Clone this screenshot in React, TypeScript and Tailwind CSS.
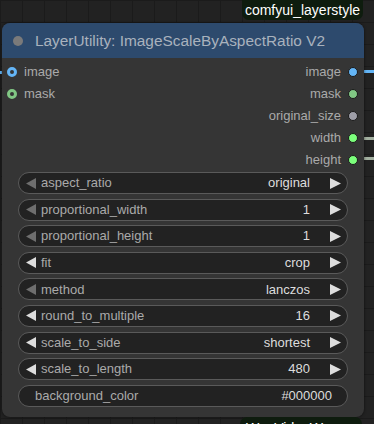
import React from 'react';

const inputs = [
  { name: 'image', color: '#64b5f6' },
  { name: 'mask', color: '#81c784' },
];

const outputs = [
  { name: 'image', color: '#64b5f6' },
  { name: 'mask', color: '#81c784' },
  { name: 'original_size', color: '#9e9ea8' },
  { name: 'width', color: '#7cff7c' },
  { name: 'height', color: '#7cff7c' },
];

const widgets = [
  { label: 'aspect_ratio', value: 'original', leftOff: true },
  { label: 'proportional_width', value: '1', leftOff: true },
  { label: 'proportional_height', value: '1', leftOff: true },
  { label: 'fit', value: 'crop', leftOff: false },
  { label: 'method', value: 'lanczos', leftOff: true },
  { label: 'round_to_multiple', value: '16', leftOff: false },
  { label: 'scale_to_side', value: 'shortest', leftOff: false },
  { label: 'scale_to_length', value: '480', leftOff: false },
];

function Arrow({ dir, dim }: { dir: 'left' | 'right'; dim?: boolean }) {
  const pts = dir === 'left' ? '10,0 10,11 0,5.5' : '0,0 0,11 11,5.5';
  return (
    <svg width="11" height="11" viewBox="0 0 11 11" className="shrink-0">
      <polygon points={pts} fill={dim ? '#6e6e6e' : '#dddddd'} />
    </svg>
  );
}

export default function App() {
  return (
    <div
      className="relative w-[374px] h-[424px] overflow-hidden bg-[#222222] bg-[linear-gradient(#1b1b1b_1px,transparent_1px),linear-gradient(90deg,#1b1b1b_1px,transparent_1px)] bg-[size:22px_22px] font-['Liberation_Sans',Arial,sans-serif]"
    >
      {/* links */}
      <div className="absolute left-0 top-[71px] w-[4px] h-[3px] bg-[#64b5f6]" />
      <div className="absolute left-[362px] top-[70px] w-[12px] h-[3px] bg-[#64b5f6]" />
      <div className="absolute left-[362px] top-[137px] w-[12px] h-[3px] bg-[#a3b0a0]" />
      <div className="absolute left-[362px] top-[157px] w-[12px] h-[3px] bg-[#a3b0a0]" />

      {/* badge top */}
      <div className="absolute left-[242px] top-[-6px] h-[26px] w-[121px] rounded-[7px] bg-[#0e1c0e] flex items-center justify-center pt-[6px] text-[14px] text-white">
        comfyui_layerstyle
      </div>

      {/* node */}
      <div className="relative ml-[2px] mt-[23px] w-[362px] rounded-[8px] bg-[#353535] shadow-[0_0_3px_rgba(0,0,0,0.6)]">
        <div className="flex h-[35px] items-center gap-[12px] rounded-t-[8px] bg-[#2d4a6d] pl-[11px]">
          <div className="h-[10px] w-[10px] rounded-full bg-[#7a7a7a]" />
          <span className="text-[15.4px] text-[#a9b2bd]">LayerUtility: ImageScaleByAspectRatio V2</span>
        </div>

        <div className="flex justify-between pt-[3px]">
          <div className="flex flex-col">
            {inputs.map((s) => (
              <div key={s.name} className="flex h-[22px] items-center gap-[7px] pl-[5px]">
                <div
                  className="h-[10px] w-[10px] rounded-full border-[3px] bg-[#353535]"
                  style={{ borderColor: s.color }}
                />
                <span className="text-[13px] text-[#aaaaaa]">{s.name}</span>
              </div>
            ))}
          </div>
          <div className="flex flex-col items-end">
            {outputs.map((s) => (
              <div key={s.name} className="flex h-[22px] items-center gap-[7px] pr-[6px]">
                <span className="text-[13px] text-[#aaaaaa]">{s.name}</span>
                <div
                  className="h-[10px] w-[10px] rounded-full border border-[#1a1a1a]"
                  style={{ backgroundColor: s.color }}
                />
              </div>
            ))}
          </div>
        </div>

        <div className="flex flex-col gap-[4.6px] px-[16px] pb-[10px] pt-[1px]">
          {widgets.map((w) => (
            <div
              key={w.label}
              className="flex h-[22px] items-center rounded-full border border-[#5a5a5a] bg-[#222222] pl-[7px] pr-[6px] text-[13px]"
            >
              <Arrow dir="left" dim={w.leftOff} />
              <span className="ml-[4px] text-[#aaaaaa]">{w.label}</span>
              <span className="ml-auto mr-[20px] text-[#dddddd]">{w.value}</span>
              <Arrow dir="right" />
            </div>
          ))}
          <div className="flex h-[22px] items-center rounded-full border border-[#5a5a5a] bg-[#222222] pl-[16px] pr-[15px] text-[13px]">
            <span className="text-[#aaaaaa]">background_color</span>
            <span className="ml-auto text-[#dddddd]">#000000</span>
          </div>
        </div>
      </div>

      {/* badge bottom */}
      <div className="absolute left-[240px] top-[417px] h-[24px] w-[122px] rounded-[7px] bg-[#0e1c0e] pt-[1px] pl-[6px] text-[14px] leading-[20px] text-white">
        WanVideoWrapper
      </div>
    </div>
  );
}
